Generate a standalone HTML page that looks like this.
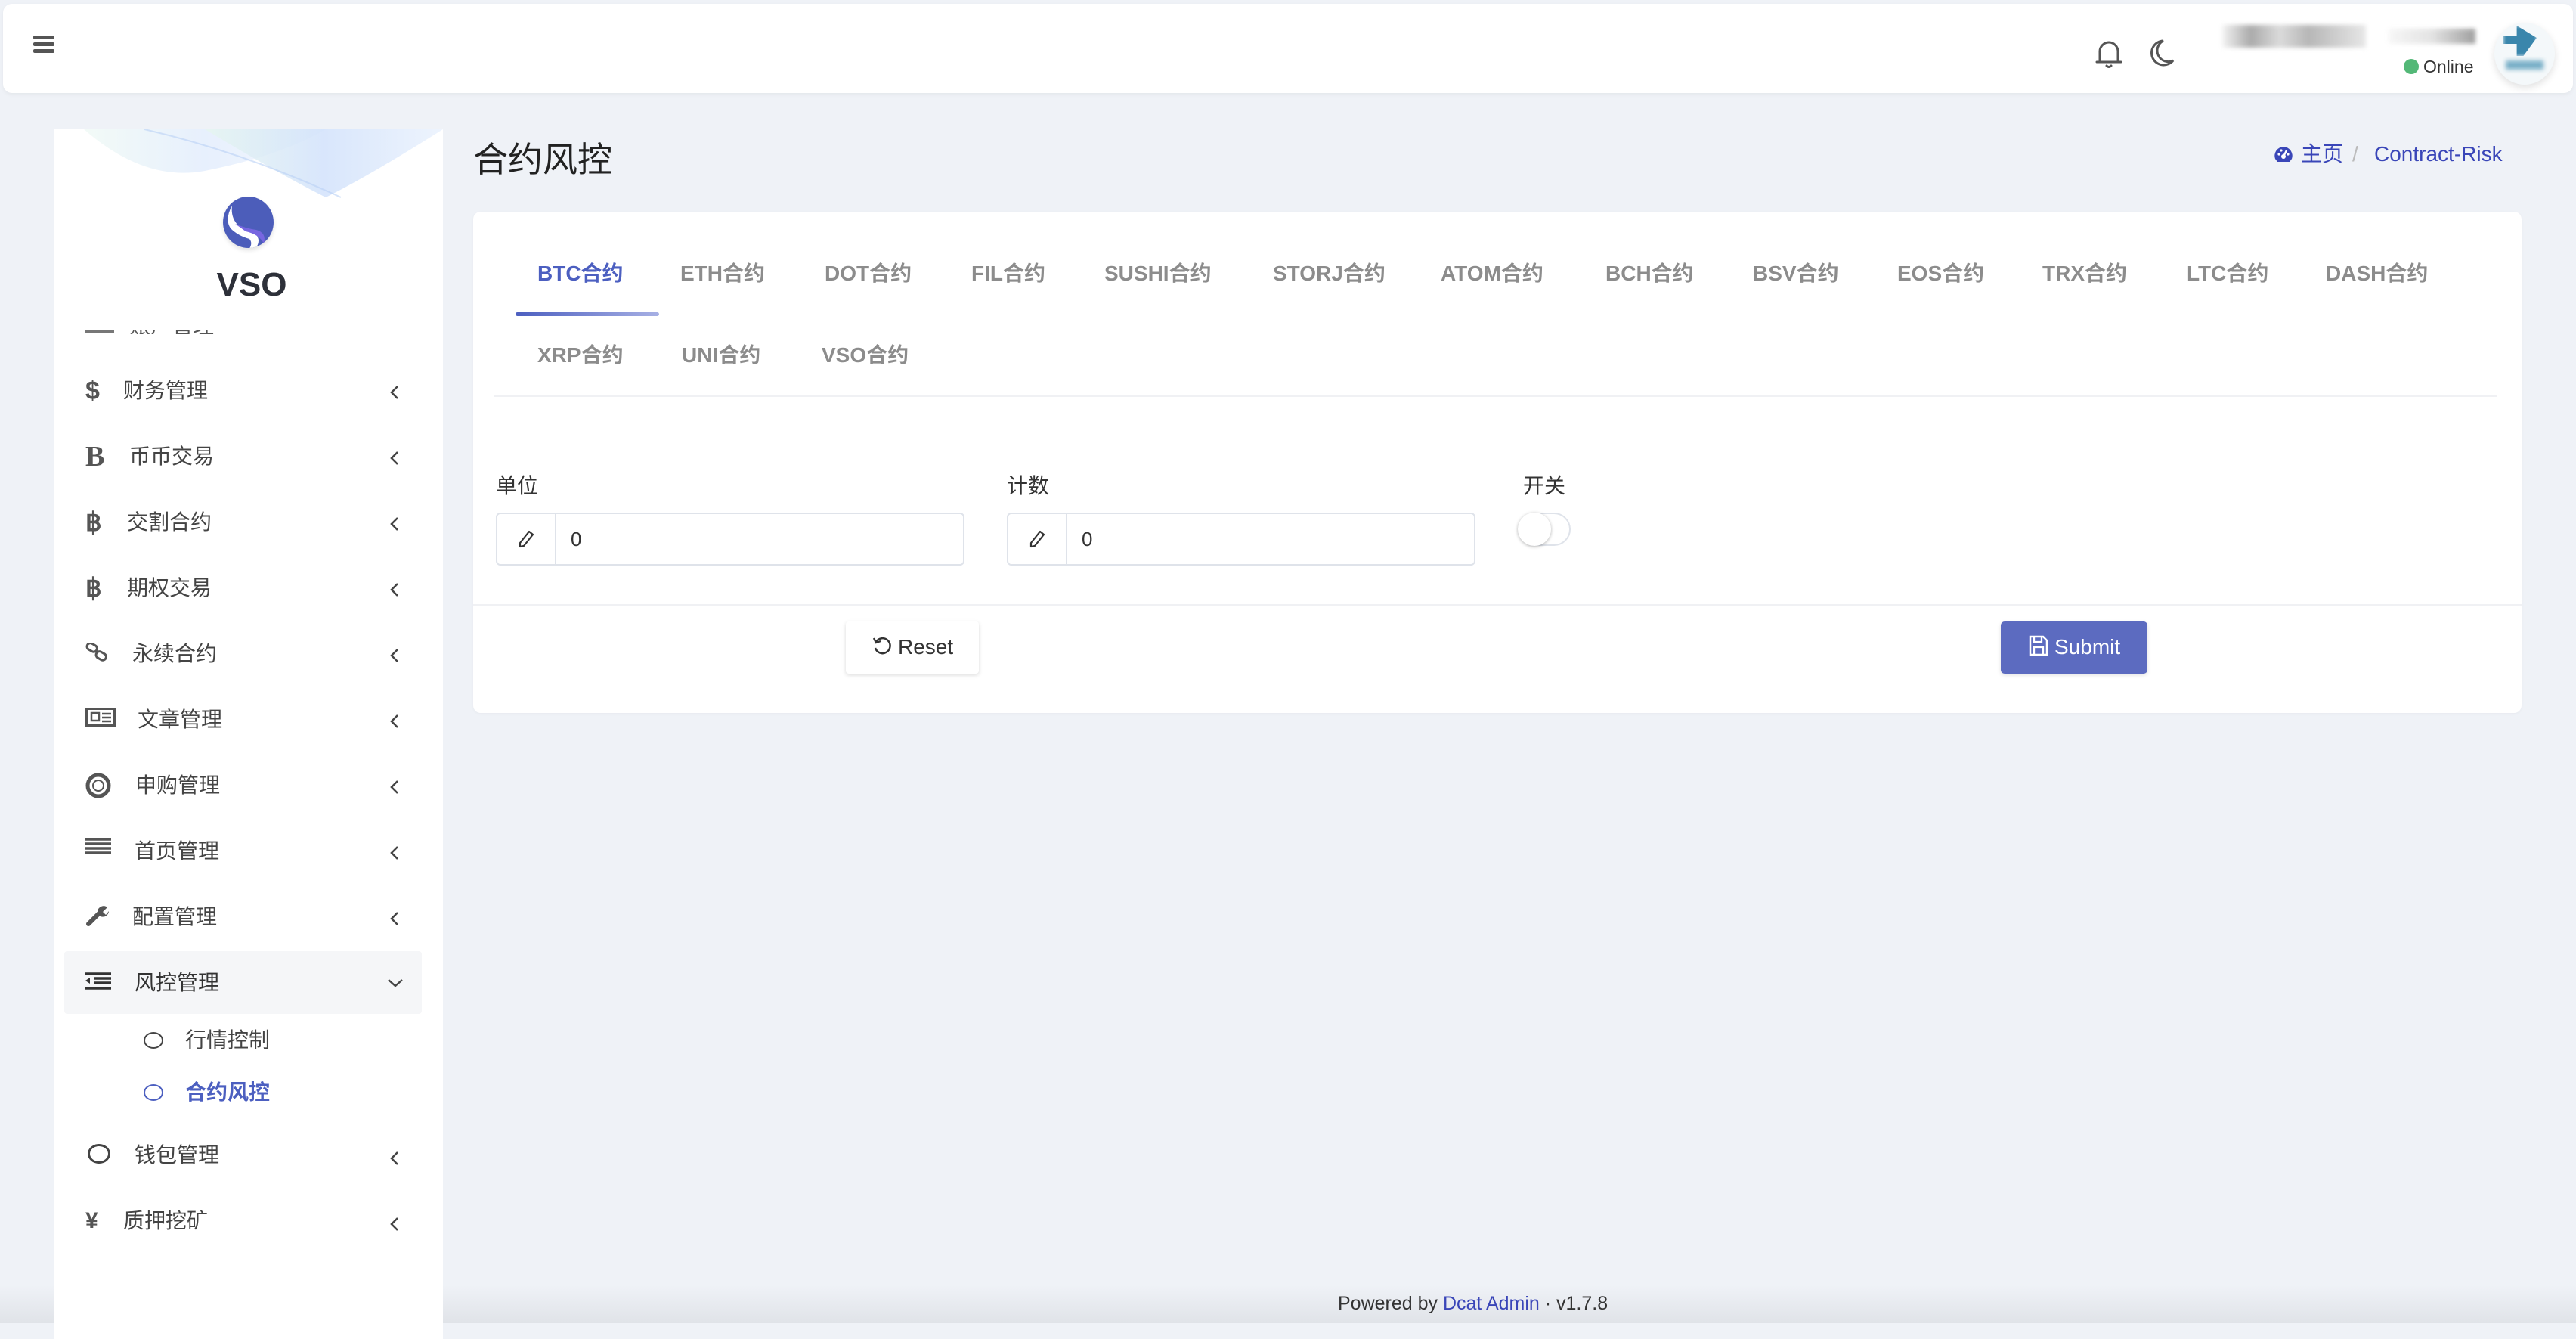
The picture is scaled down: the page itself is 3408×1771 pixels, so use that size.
<!DOCTYPE html>
<html><head><meta charset="utf-8"><style>
*{margin:0;padding:0;box-sizing:border-box}
body{width:3408px;height:1750px;background:#eff2f7;font-family:"Liberation Sans","Noto Sans CJK SC",sans-serif;position:relative;overflow:hidden;color:#333}
.a{position:absolute;white-space:nowrap}
.nav{left:4px;top:5px;width:3400px;height:118px;background:#fff;border-radius:12px;box-shadow:0 2px 6px rgba(0,0,0,.05)}
.side{left:71px;top:171px;width:515px;height:1600px;background:#fff}
.mi{font-size:28px;color:#444;height:44px;line-height:44px}
.ic{font-size:34px;color:#555;font-weight:bold;height:44px;line-height:44px}
.tab{font-size:28px;font-weight:bold;color:#8c8c8c;height:40px;line-height:40px}
.card{left:626px;top:280px;width:2710px;height:663px;background:#fff;border-radius:10px;box-shadow:0 1px 4px rgba(0,0,0,.04)}
.inp{height:70px;width:620px;border:2px solid #dfe3ea;border-radius:6px;background:#fff}
.inp .add{position:absolute;left:0;top:0;width:78px;height:66px;border-right:2px solid #dfe3ea}
.lbl{font-size:28px;color:#333;height:40px;line-height:40px}
</style></head><body>
<div class="a" style="left:0;top:1700px;width:3408px;height:50px;background:linear-gradient(#eff2f7,#e0e3e8)"></div>
<div class="a nav"></div>
<div class="a" style="left:44px;top:47px;width:28px;height:5px;background:#555;border-radius:2px"></div>
<div class="a" style="left:44px;top:56px;width:28px;height:5px;background:#555;border-radius:2px"></div>
<div class="a" style="left:44px;top:65px;width:28px;height:5px;background:#555;border-radius:2px"></div>
<svg class="a" style="left:2770px;top:50px" width="40" height="42" viewBox="0 0 40 42"><path d="M8 31 L8 18 A12 12 0 0 1 32 18 L32 31 M4 32 L36 32 M17 37 Q20 40 23 37" fill="none" stroke="#555" stroke-width="3" stroke-linecap="round"/></svg>
<svg class="a" style="left:2842px;top:50px" width="36" height="40" viewBox="0 0 36 40"><path d="M20 4 A16 16 0 1 0 33 30 A13 13 0 0 1 20 4 Z" fill="none" stroke="#555" stroke-width="3"/></svg>
<div class="a" style="left:2940px;top:33px;width:190px;height:30px;background:linear-gradient(90deg,#eee,#888 20%,#ccc 40%,#999 60%,#bbb 80%,#ddd);filter:blur(3px);opacity:.7"></div>
<div class="a" style="left:3160px;top:38px;width:115px;height:20px;background:linear-gradient(90deg,#f5f5f5,#ddd 50%,#888);filter:blur(3px);opacity:.8"></div>
<div class="a" style="left:3180px;top:78px;width:20px;height:20px;border-radius:50%;background:#53b877"></div>
<div class="a" style="left:3206px;top:72px;font-size:23px;line-height:32px;color:#333">Online</div>
<div class="a" style="left:3300px;top:30px;width:80px;height:82px;border-radius:50%;background:#f4f8fa;box-shadow:0 4px 10px rgba(0,0,0,.12)"></div>
<div class="a" style="left:3312px;top:34px;width:44px;height:40px;background:#3a86ac;filter:blur(2px);clip-path:polygon(40% 0,100% 40%,60% 100%,40% 100%,40% 60%,0 60%,0 35%,40% 35%)"></div>
<div class="a" style="left:3315px;top:80px;width:50px;height:12px;background:#7ab0c8;filter:blur(3px)"></div>

<div class="a side"></div>
<svg class="a" style="left:71px;top:171px" width="515" height="95" viewBox="0 0 515 95">
<defs><linearGradient id="g" x1="0" x2="1"><stop offset="0" stop-color="#e6f6ef"/><stop offset=".5" stop-color="#cfe0fb"/><stop offset="1" stop-color="#e9f1fd"/></linearGradient></defs>
<path d="M40 0 Q120 70 200 55 Q300 35 360 0 Z" fill="url(#g)" opacity=".5"/>
<path d="M200 0 Q300 60 360 90 Q420 60 515 0 Z" fill="url(#g)" opacity=".8"/>
<path d="M120 0 Q250 30 380 90" fill="none" stroke="#b9d0f5" stroke-width="2" opacity=".6"/>
</svg>
<div class="a" style="left:295px;top:260px;width:67px;height:68px;border-radius:50%;background:#4c5dba;overflow:hidden;box-shadow:0 3px 6px rgba(0,0,0,.12)">
<svg width="67" height="68" viewBox="0 0 67 68"><path d="M12 12 Q2 30 10 42 Q20 52 35 56 Q40 62 34 70 L42 70 Q52 58 42 48 Q28 42 20 38 Q10 28 12 12Z" fill="#fff"/><path d="M16 36 Q30 42 44 44 Q58 48 54 62 Q48 50 30 46 Z" fill="#7766e0"/></svg></div>
<div class="a" style="left:240px;top:350px;width:186px;text-align:center;font-size:44px;font-weight:bold;color:#2d3039;line-height:54px">VSO</div>

<div class="a" style="left:71px;top:436px;width:515px;height:6px;overflow:hidden">
<div class="a mi" style="left:100px;top:-26px;color:#555">账户管理</div>
<div class="a" style="left:42px;top:1px;width:38px;height:3px;background:#777"></div></div>

<div class="a" style="left:85px;top:1258px;width:473px;height:83px;background:#f5f6f8;border-radius:4px"></div>

<div class="a ic" style="left:113px;top:495px">$</div><div class="a mi" style="left:163px;top:495px">财务管理</div>
<div class="a ic" style="left:113px;top:582px;font-family:'Liberation Serif',serif;font-size:38px">B</div><div class="a mi" style="left:171px;top:582px">币币交易</div>
<div class="a ic" style="left:113px;top:669px">&#x0E3F;</div><div class="a mi" style="left:168px;top:669px">交割合约</div>
<div class="a ic" style="left:113px;top:756px">&#x0E3F;</div><div class="a mi" style="left:168px;top:756px">期权交易</div>
<svg class="a" style="left:113px;top:850px" width="32" height="26" viewBox="0 0 32 26"><rect x="2" y="2" width="14" height="9" rx="4.5" fill="none" stroke="#555" stroke-width="3" transform="rotate(30 9 6)"/><rect x="14" y="13" width="14" height="9" rx="4.5" fill="none" stroke="#555" stroke-width="3" transform="rotate(30 21 17)"/></svg>
<div class="a mi" style="left:175px;top:843px">永续合约</div>
<svg class="a" style="left:113px;top:936px" width="40" height="26" viewBox="0 0 40 26"><rect x="1.5" y="1.5" width="37" height="22" fill="none" stroke="#555" stroke-width="3"/><rect x="8" y="7" width="10" height="10" fill="none" stroke="#555" stroke-width="2.5"/><path d="M22 8h12M22 13h12M22 18h12" stroke="#555" stroke-width="2.5"/></svg>
<div class="a mi" style="left:182px;top:930px">文章管理</div>
<svg class="a" style="left:113px;top:1022px" width="34" height="34" viewBox="0 0 34 34"><circle cx="17" cy="17" r="14" fill="none" stroke="#555" stroke-width="5"/><circle cx="17" cy="17" r="7" fill="#fff" stroke="#555" stroke-width="2"/></svg>
<div class="a mi" style="left:179px;top:1017px">申购管理</div>
<svg class="a" style="left:113px;top:1108px" width="34" height="22" viewBox="0 0 34 22"><path d="M0 2h34M0 8h34M0 14h34M0 20h34" stroke="#555" stroke-width="3.5"/></svg>
<div class="a mi" style="left:178px;top:1104px">首页管理</div>
<svg class="a" style="left:113px;top:1196px" width="32" height="30" viewBox="0 0 32 30"><path d="M4 26 L18 12" stroke="#555" stroke-width="6" stroke-linecap="round"/><path d="M16 10 A8 8 0 0 1 29 4 L23 10 L27 14 L31 9 A8 8 0 0 1 20 16 Z" fill="#555"/></svg>
<div class="a mi" style="left:175px;top:1191px">配置管理</div>
<svg class="a" style="left:113px;top:1286px" width="34" height="24" viewBox="0 0 34 24"><path d="M0 2h34M12 8h22M12 14h22M0 21h34" stroke="#333" stroke-width="3.5"/><path d="M0 11 L6 7 L6 15 Z" fill="#333"/></svg>
<div class="a mi" style="left:178px;top:1278px;color:#333">风控管理</div>
<svg class="a" style="left:511px;top:1292px" width="24" height="16" viewBox="0 0 24 16"><path d="M3 4 L12 12 L21 4" fill="none" stroke="#444" stroke-width="2.5"/></svg>
<div class="a" style="left:190px;top:1365px;width:26px;height:22px;border:2.5px solid #444;border-radius:50%"></div>
<div class="a mi" style="left:245px;top:1354px">行情控制</div>
<div class="a" style="left:190px;top:1434px;width:26px;height:22px;border:2.5px solid #4c5fc0;border-radius:50%"></div>
<div class="a mi" style="left:245px;top:1423px;color:#4c5fc0;font-weight:bold">合约风控</div>
<div class="a" style="left:116px;top:1513px;width:30px;height:26px;border:3px solid #444;border-radius:50%"></div>
<div class="a mi" style="left:178px;top:1506px">钱包管理</div>
<div class="a ic" style="left:113px;top:1593px;font-size:30px">¥</div><div class="a mi" style="left:163px;top:1593px">质押挖矿</div>
<svg class="a" style="left:514px;top:507px" width="16" height="24" viewBox="0 0 16 24"><path d="M12 4 L4 12 L12 20" fill="none" stroke="#444" stroke-width="2.5"/></svg>
<svg class="a" style="left:514px;top:594px" width="16" height="24" viewBox="0 0 16 24"><path d="M12 4 L4 12 L12 20" fill="none" stroke="#444" stroke-width="2.5"/></svg>
<svg class="a" style="left:514px;top:681px" width="16" height="24" viewBox="0 0 16 24"><path d="M12 4 L4 12 L12 20" fill="none" stroke="#444" stroke-width="2.5"/></svg>
<svg class="a" style="left:514px;top:768px" width="16" height="24" viewBox="0 0 16 24"><path d="M12 4 L4 12 L12 20" fill="none" stroke="#444" stroke-width="2.5"/></svg>
<svg class="a" style="left:514px;top:855px" width="16" height="24" viewBox="0 0 16 24"><path d="M12 4 L4 12 L12 20" fill="none" stroke="#444" stroke-width="2.5"/></svg>
<svg class="a" style="left:514px;top:942px" width="16" height="24" viewBox="0 0 16 24"><path d="M12 4 L4 12 L12 20" fill="none" stroke="#444" stroke-width="2.5"/></svg>
<svg class="a" style="left:514px;top:1029px" width="16" height="24" viewBox="0 0 16 24"><path d="M12 4 L4 12 L12 20" fill="none" stroke="#444" stroke-width="2.5"/></svg>
<svg class="a" style="left:514px;top:1116px" width="16" height="24" viewBox="0 0 16 24"><path d="M12 4 L4 12 L12 20" fill="none" stroke="#444" stroke-width="2.5"/></svg>
<svg class="a" style="left:514px;top:1203px" width="16" height="24" viewBox="0 0 16 24"><path d="M12 4 L4 12 L12 20" fill="none" stroke="#444" stroke-width="2.5"/></svg>
<svg class="a" style="left:514px;top:1520px" width="16" height="24" viewBox="0 0 16 24"><path d="M12 4 L4 12 L12 20" fill="none" stroke="#444" stroke-width="2.5"/></svg>
<svg class="a" style="left:514px;top:1607px" width="16" height="24" viewBox="0 0 16 24"><path d="M12 4 L4 12 L12 20" fill="none" stroke="#444" stroke-width="2.5"/></svg>

<div class="a" style="left:626px;top:182px;font-size:46px;line-height:58px;color:#222">合约风控</div>
<svg class="a" style="left:3008px;top:192px" width="26" height="24" viewBox="0 0 26 24"><path d="M13 2 A12 12 0 0 0 2 18 L5 22 L21 22 L24 18 A12 12 0 0 0 13 2Z" fill="#3a46b8"/><circle cx="13" cy="15" r="3" fill="#fff"/><path d="M13 15 L17 7" stroke="#fff" stroke-width="2.5"/><circle cx="7" cy="12" r="1.6" fill="#fff"/><circle cx="10" cy="7" r="1.6" fill="#fff"/><circle cx="19" cy="12" r="1.6" fill="#fff"/></svg>
<div class="a" style="left:3044px;top:186px;font-size:28px;line-height:36px;color:#3a46b8">主页</div>
<div class="a" style="left:3112px;top:186px;font-size:28px;line-height:36px;color:#bbb">/</div>
<div class="a" style="left:3141px;top:186px;font-size:28px;line-height:36px;color:#3a46b8">Contract-Risk</div>

<div class="a card"></div>
<div class="a tab" style="left:711px;top:342px;color:#4c5fc0">BTC合约</div>
<div class="a tab" style="left:900px;top:342px">ETH合约</div>
<div class="a tab" style="left:1091px;top:342px">DOT合约</div>
<div class="a tab" style="left:1285px;top:342px">FIL合约</div>
<div class="a tab" style="left:1461px;top:342px">SUSHI合约</div>
<div class="a tab" style="left:1684px;top:342px">STORJ合约</div>
<div class="a tab" style="left:1906px;top:342px">ATOM合约</div>
<div class="a tab" style="left:2124px;top:342px">BCH合约</div>
<div class="a tab" style="left:2319px;top:342px">BSV合约</div>
<div class="a tab" style="left:2510px;top:342px">EOS合约</div>
<div class="a tab" style="left:2702px;top:342px">TRX合约</div>
<div class="a tab" style="left:2893px;top:342px">LTC合约</div>
<div class="a tab" style="left:3077px;top:342px">DASH合约</div>
<div class="a tab" style="left:711px;top:450px">XRP合约</div>
<div class="a tab" style="left:902px;top:450px">UNI合约</div>
<div class="a tab" style="left:1087px;top:450px">VSO合约</div>
<div class="a" style="left:682px;top:413px;width:190px;height:5px;border-radius:3px;background:linear-gradient(90deg,#4c5fc0,#a7b0e4)"></div>
<div class="a" style="left:654px;top:523px;width:2650px;height:2px;background:#f0f1f4"></div>

<div class="a lbl" style="left:656px;top:623px">单位</div>
<div class="a lbl" style="left:1332px;top:623px">计数</div>
<div class="a lbl" style="left:2015px;top:623px">开关</div>
<div class="a inp" style="left:656px;top:678px"><div class="add"></div>
<svg class="a" style="left:26px;top:20px" width="24" height="26" viewBox="0 0 24 26"><path d="M16 3 L21 7 L9 22 L4 23 L4 18 Z" fill="none" stroke="#333" stroke-width="2.2" stroke-linejoin="round"/></svg>
<div class="a" style="left:97px;top:14px;font-size:26px;line-height:38px;color:#333">0</div></div>
<div class="a inp" style="left:1332px;top:678px"><div class="add"></div>
<svg class="a" style="left:26px;top:20px" width="24" height="26" viewBox="0 0 24 26"><path d="M16 3 L21 7 L9 22 L4 23 L4 18 Z" fill="none" stroke="#333" stroke-width="2.2" stroke-linejoin="round"/></svg>
<div class="a" style="left:97px;top:14px;font-size:26px;line-height:38px;color:#333">0</div></div>
<div class="a" style="left:2008px;top:678px;width:70px;height:44px;border-radius:22px;border:2px solid #dfe3ea;background:#fff"></div>
<div class="a" style="left:2008px;top:678px;width:44px;height:44px;border-radius:50%;background:#fff;box-shadow:0 1px 4px rgba(0,0,0,.3)"></div>

<div class="a" style="left:626px;top:799px;width:2710px;height:2px;background:#f0f1f4"></div>
<div class="a" style="left:1119px;top:822px;width:176px;height:69px;background:#fff;border-radius:4px;box-shadow:0 2px 6px rgba(0,0,0,.15)"></div>
<svg class="a" style="left:1153px;top:840px" width="28" height="28" viewBox="0 0 28 28"><path d="M6 9 A10 10 0 1 1 5 17" fill="none" stroke="#333" stroke-width="2.5"/><path d="M3 4 L6 10 L12 8" fill="none" stroke="#333" stroke-width="2.5"/></svg>
<div class="a" style="left:1188px;top:836px;font-size:28px;line-height:40px;color:#333">Reset</div>
<div class="a" style="left:2647px;top:822px;width:194px;height:69px;background:#5c6bc0;border-radius:5px;box-shadow:0 2px 6px rgba(0,0,0,.12)"></div>
<svg class="a" style="left:2684px;top:840px" width="26" height="28" viewBox="0 0 26 28"><path d="M2 2 H19 L24 7 V26 H2 Z" fill="none" stroke="#fff" stroke-width="2.5"/><path d="M7 2 V9 H17 V2 M7 26 V16 H19 V26" fill="none" stroke="#fff" stroke-width="2.3"/></svg>
<div class="a" style="left:2718px;top:836px;font-size:28px;line-height:40px;color:#fff">Submit</div>

<div class="a" style="left:1770px;top:1708px;font-size:25px;line-height:32px;color:#333">Powered by <span style="color:#3a46b8">Dcat Admin</span> · v1.7.8</div>
</body></html>
